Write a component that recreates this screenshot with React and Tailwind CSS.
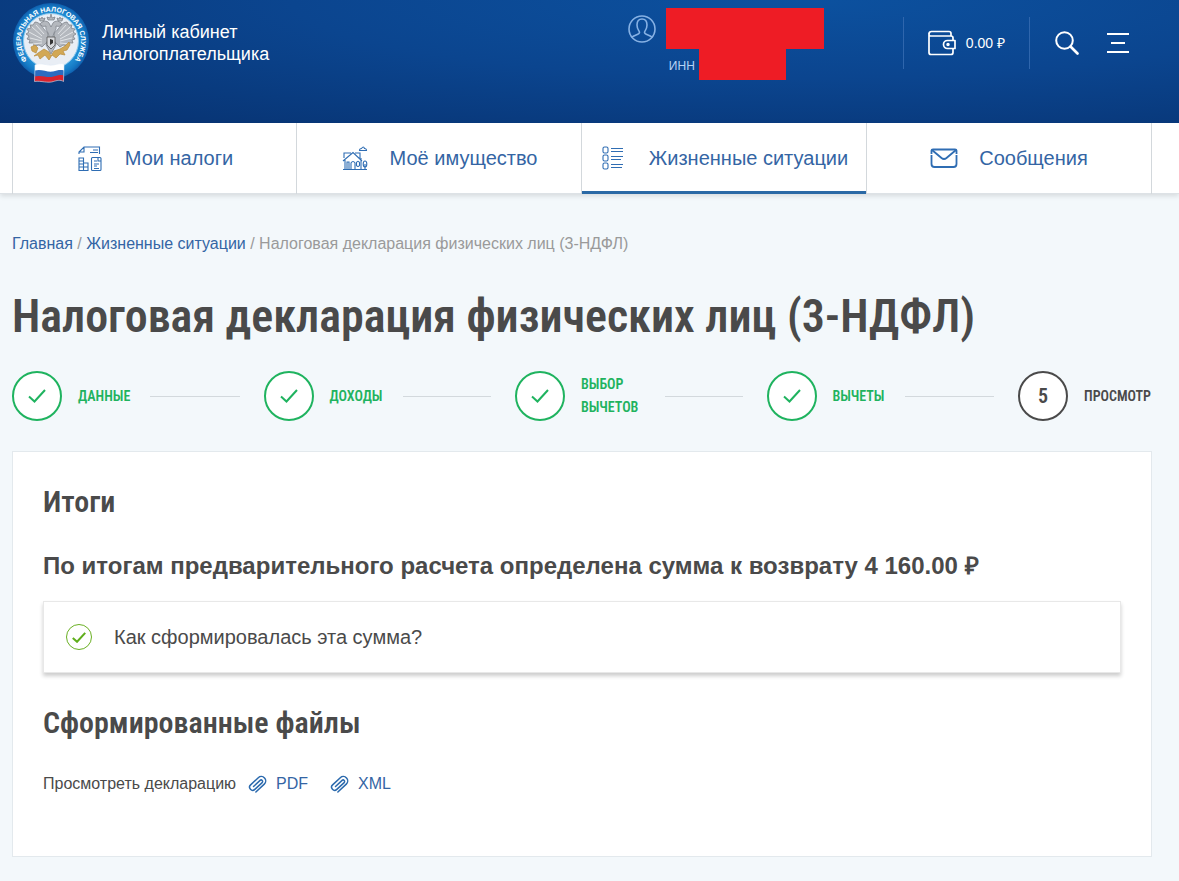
const displayFont = "font-['Roboto_Condensed','Liberation_Sans_Narrow',sans-serif] font-semibold";

const steps = [
  { label: 'Данные', done: true },
  { label: 'Доходы', done: true },
  { label: 'Выбор вычетов', done: true },
  { label: 'Вычеты', done: true },
  { label: 'Просмотр', done: false },
];

function Logo() {
  return (
    <svg viewBox="0 0 78 84" className="w-[78px] h-[84px] shrink-0" aria-hidden="true">
      <defs>
        <radialGradient id="ring">
          <stop offset="0.7" stopColor="#2593d8" />
          <stop offset="0.9" stopColor="#1579c4" />
          <stop offset="1" stopColor="#0f5fae" />
        </radialGradient>
        <path id="ringText" d="M 18 63 A 30 30 0 1 1 60 63" />
      </defs>
      <circle cx="39" cy="41" r="38" fill="url(#ring)" />
      <circle cx="39" cy="41" r="27.5" fill="#e9eef5" stroke="#8ecbf0" />
      <text fill="#fff" className="font-['Liberation_Sans',sans-serif] font-bold text-[7px]">
        <textPath href="#ringText" startOffset="50%" textAnchor="middle">
          ФЕДЕРАЛЬНАЯ НАЛОГОВАЯ СЛУЖБА
        </textPath>
      </text>
      {/* eagle wings */}
      <g fill="#b4b8be" stroke="#777b83" strokeWidth="0.7">
        <path d="M36 33C31 30 29 22 23 22l-2 3-3 0 1 3-4 1 2 3-3 2 3 2-2 3 3 1-1 3 4 0 1 3 5-1 3 2 6-6z" />
        <path d="M42 33c5-3 7-11 13-11l2 3 3 0-1 3 4 1-2 3 3 2-3 2 2 3-3 1 1 3-4 0-1 3-5-1-3 2-6-6z" />
        <path d="M37 36c-1-5-4-6-3-10-3 1-5 0-6-2 2-3 7-4 9-1l2 4 2-4c2-3 7-2 9 1-1 2-3 3-6 2 1 4-2 5-3 10l3 9-5 9-5-9z" />
        <path d="M36 20l-1-3 3 1 1-4 1 4 3-1-1 3zM28 21l-1-3 2 1 1-2 1 2 2-1-1 3zM46 21l-1-3 2 1 1-2 1 2 2-1-1 3z" />
      </g>
      <g stroke="#eef0f3" strokeWidth="0.8" fill="none">
        <path d="M20 27l10 9M17 32l13 7M18 38l12 3M20 44l10-1M24 25l8 9M58 27l-10 9M61 32l-13 7M60 38l-12 3M58 44l-10-1M54 25l-8 9" />
      </g>
      <path d="M35 37h8v8l-4 4-4-4z" fill="#d7d9dc" stroke="#555" strokeWidth="0.8" />
      <path d="M38 39l3 1v3l-3 2z" fill="#333" />
      <g fill="#d2a855" stroke="#b98d3e" strokeWidth="0.7">
        <path d="M19 47l4-2 3 3-2 5-4-2zM26 53l6-4 5 3 2 4 3-5 6-2 5-3 4-4 1 3-3 5-4 1 2 4-5-1-4 4-4-3-3 5-4-5-5 4-2-4-4 1z" />
      </g>
      {/* flag */}
      <path d="M23 65c6-3 12 1 18 0 5-1 8-2 11-1l0 8H23z" fill="#fff" />
      <path d="M23 70.500c6-2 12 2 18 1 4-1 7-2 11-1l-.5 8H22.500z" fill="#2c6cc0" />
      <path d="M22.500 76.500c7-2 13 2 19 0 4-1 7-2 10-1v6c-3-2-7-1-10 0-6 2-12-1-19 0z" fill="#d8232e" />
      <path d="M23 65c6-3 12 1 18 0 5-1 8-2 11-1l-.5 17.500c-3-2-7-1-10 0-6 2-12-1-19 0z" fill="none" stroke="#dfe9f5" strokeWidth="0.6" />
    </svg>
  );
}

function UserIcon() {
  return (
    <svg viewBox="0 0 28 28" className="size-7 shrink-0" fill="none" stroke="#86b1e4" strokeWidth="1.6" aria-hidden="true">
      <circle cx="14" cy="14" r="13" />
      <path d="M3.5 22.5c3-2.5 8-3 8-5 0-1.500-2.500-3-2.500-7.500 0-4 2-6 5-6s5 2 5 6c0 4.500-2.500 6-2.500 7.500 0 2 5 2.500 8 5" />
    </svg>
  );
}

function WalletIcon() {
  return (
    <svg viewBox="0 0 28 26" className="w-7 h-[26px]" fill="none" stroke="#fff" strokeWidth="1.7" strokeLinejoin="round" aria-hidden="true">
      <path d="M25 10V8q0-2-2-2H2.500Q1 6 1 4v18.500q0 2 2 2h20q2 0 2-2V18.500" />
      <path d="M1 4Q1 1.500 3.500 1.500H21q2 0 2 2V6" />
      <path d="M27 10.500h-7.500a4 4 0 0 0 0 8H27z" />
      <circle cx="20" cy="14.500" r="0.900" fill="#fff" />
    </svg>
  );
}

function SearchIcon() {
  return (
    <svg viewBox="0 0 24 24" className="size-6" fill="none" stroke="#fff" aria-hidden="true">
      <circle cx="9.500" cy="9.500" r="8.300" strokeWidth="2" />
      <path d="M15.500 15.500l7 7" strokeWidth="2.600" strokeLinecap="round" />
    </svg>
  );
}

function MenuIcon() {
  return (
    <svg viewBox="0 0 24 24" className="size-6" stroke="#fff" strokeWidth="2" aria-hidden="true">
      <path d="M1 3h22M5 12h14M1 21h22" />
    </svg>
  );
}

function TaxIcon() {
  return (
    <>
      <path d="M3 10V8l5-5h15.500v7M3 8h5V3M17 6h5M14 8.500h8" />
      <path d="M3 14h4.500v12.500H3zM7.500 19H12v7.500H7.500zM3 17h4.500M3 20h4.500M3 23h9" />
      <rect x="15.500" y="13.500" width="9.500" height="13" rx="1" />
      <path d="M18 17h3M18 20h5M18 22h3M18 24.500h5M22 14v3h3" />
    </>
  );
}

function HouseIcon() {
  return (
    <>
      <path d="M2 25.500h24M4 25V15M20 25V14M2 17l10-8.500L21 17M3 14V9h7M14 9h5v5" />
      <path d="M6 25v-7h2v7M10 25v-6q2-3 4 0v6M15.500 18.500q1.500-2.500 3 0v3q-1.500 2-3 0z" />
      <ellipse cx="24" cy="20" rx="1.800" ry="3" />
      <path d="M24 20v5.500M18.500 6.500h7q0-2-2-2-1-3-3 0-2 0-2 2z" />
    </>
  );
}

function ListIcon() {
  return (
    <>
      <rect x="3" y="3" width="5" height="6" rx="1.500" />
      <rect x="3" y="11" width="5" height="6" rx="1.500" />
      <rect x="3" y="19" width="5" height="6" rx="1.500" />
      <path d="M11 4.500h12M11 7.500h12M11 12.500h12M11 15.500h10M11 20.500h12M11 23.500h11" />
    </>
  );
}

function MailIcon() {
  return (
    <>
      <path d="M1.500 10V6.500Q1.500 5.500 3 5.500h22q1.500 0 1.500 1V10M1.500 11v9q0 3 3 3h19q3 0 3-3V11" strokeWidth="1.800" />
      <path d="M2 6l9.500 8q2.500 2 5 0L26 6" strokeWidth="1.800" />
    </>
  );
}

function CheckIcon({ className, strokeWidth = 2 }) {
  return (
    <svg viewBox="0 0 18 14" className={className} fill="none" stroke="currentColor" strokeWidth={strokeWidth} aria-hidden="true">
      <path d="M1 7.500l5.500 5L17 1" />
    </svg>
  );
}

function ClipIcon() {
  return (
    <svg viewBox="0 0 20 20" className="size-5" fill="none" stroke="#2a69ad" strokeWidth="1.500" strokeLinecap="round" aria-hidden="true">
      <path
        transform="translate(10 10) rotate(47)"
        d="M4.400 7V-4.500A4.400 4.400 0 0 0-4.400-4.500V6A3.100 3.100 0 0 0 1.800 6V-4A1.500 1.500 0 0 0-1.200-4V5"
      />
    </svg>
  );
}

const tabs = [
  { label: 'Мои налоги', Icon: TaxIcon },
  { label: 'Моё имущество', Icon: HouseIcon },
  { label: 'Жизненные ситуации', Icon: ListIcon, active: true },
  { label: 'Сообщения', Icon: MailIcon },
];

function Header() {
  return (
    <header className="bg-[radial-gradient(ellipse_at_68%_0%,#0c519f_0%,#0b458f_45%,#07316f_100%)] text-white">
      <div className="ml-3 mr-[27px] flex items-start pb-[39px]">
        <a href="#" className="flex items-start gap-3">
          <Logo />
          <span className="pt-[21px] text-lg leading-[22px]">
            Личный кабинет
            <br />
            налогоплательщика
          </span>
        </a>

        <div className="ml-auto mr-[79px] flex pt-2">
          <div className="pt-[7px]">
            <UserIcon />
          </div>
          <div className="ml-[10px]">
            <div className="w-[158px] h-[41px] bg-[#ee1c25]" />
            <div className="flex">
              <span className="w-[33px] pl-[3px] pt-2 text-xs leading-[18px] text-[#b5d2f5]">ИНН</span>
              <div className="w-[87px] h-[31px] bg-[#ee1c25]" />
            </div>
          </div>
        </div>

        <div className="mt-[17px] h-[52px] flex items-center">
          <a href="#" className="h-full flex items-center gap-[10px] px-6 border-x border-[#2f66ad] text-sm">
            <WalletIcon />
            <span>0.00 ₽</span>
          </a>
          <button type="button" aria-label="Поиск" className="ml-[25px]">
            <SearchIcon />
          </button>
          <button type="button" aria-label="Меню" className="ml-[27px] mr-[22px]">
            <MenuIcon />
          </button>
        </div>
      </div>
    </header>
  );
}

function Tabs() {
  return (
    <nav className="bg-white border-b border-[#dde2e6] shadow-[0_2px_5px_rgba(0,0,0,0.12)]">
      <div className="ml-3 mr-[27px] grid grid-cols-4">
        {tabs.map(({ label, Icon, active }) => (
          <a
            key={label}
            href="#"
            className={
              'h-[71px] -mb-px pb-[2px] flex items-center justify-center gap-[21px] border-r first:border-l border-[#d3d8dc] text-xl text-[#3465a4] ' +
              (active ? 'shadow-[inset_0_-3px_0_#2a69a5]' : '')
            }
          >
            <svg viewBox="0 0 28 28" className="size-7 shrink-0" fill="none" stroke="#2f6db3" strokeWidth="1.100" aria-hidden="true">
              <Icon />
            </svg>
            {label}
          </a>
        ))}
      </div>
    </nav>
  );
}

function Steps() {
  return (
    <ol className="mt-[23px] flex items-center">
      {steps.map((step, i) => {
        const last = i === steps.length - 1;
        return (
          <li
            key={step.label}
            className={
              'flex items-center ' +
              (last ? 'min-w-[134px] ' : 'flex-1 ') +
              (step.done ? 'text-[#1fb35f]' : 'text-[#4a4a4a]')
            }
          >
            <span className="size-[50px] shrink-0 rounded-full border-2 border-current bg-white flex items-center justify-center">
              {step.done ? (
                <CheckIcon className="w-[18px] h-[14px]" />
              ) : (
                <span className={displayFont + ' text-xl'}>{i + 1}</span>
              )}
            </span>
            <span className={displayFont + ' ml-4 max-w-16 text-sm leading-[23px] uppercase' + (last ? ' whitespace-nowrap' : '')}>
              {step.label}
            </span>
            {!last && <span className="ml-5 mr-6 h-px flex-1 bg-[#d3d9dd]" />}
          </li>
        );
      })}
    </ol>
  );
}

export default function App() {
  return (
    <div className="min-h-screen bg-[#f3f8fb] font-['Liberation_Sans',Arial,sans-serif] text-[#4a4a4a]">
      <Header />
      <Tabs />

      <main className="ml-3 mr-[27px] pt-[38px] pb-6">
        <div className="text-base text-[#9a9a9a]">
          <a href="#" className="text-[#3465a4]">Главная</a>
          {' / '}
          <a href="#" className="text-[#3465a4]">Жизненные ситуации</a>
          {' / '}
          <span>Налоговая декларация физических лиц (3-НДФЛ)</span>
        </div>

        <h1 className={displayFont + ' mt-7 text-[46px] leading-[64px]'}>
          Налоговая декларация физических лиц (3-НДФЛ)
        </h1>

        <Steps />

        <section className="mt-[30px] min-h-[406px] bg-white border border-[#e3e9ed] px-[30px] pt-[30px]">
          <h2 className={displayFont + ' text-3xl leading-10'}>Итоги</h2>
          <p className="mt-7 text-2xl leading-8 font-bold">
            По итогам предварительного расчета определена сумма к возврату 4 160.00 ₽
          </p>

          <button
            type="button"
            className="mt-[19px] w-full h-[72px] px-[22px] flex items-center gap-[22px] border border-[#e8e8e8] bg-white text-xl shadow-[0_3px_4px_rgba(0,0,0,0.2)]"
          >
            <span className="size-[26px] rounded-full border border-[#6ab023] text-[#5fae1b] flex items-center justify-center">
              <CheckIcon className="w-[14px] h-[11px]" strokeWidth={2.6} />
            </span>
            Как сформировалась эта сумма?
          </button>

          <h2 className={displayFont + ' mt-[30px] text-3xl leading-10'}>Сформированные файлы</h2>
          <div className="mt-[29px] flex items-center text-base">
            <span>Просмотреть декларацию</span>
            <a href="#" className="ml-3 flex items-center gap-2 text-[#3465a4]">
              <ClipIcon />
              PDF
            </a>
            <a href="#" className="ml-[22px] flex items-center gap-2 text-[#3465a4]">
              <ClipIcon />
              XML
            </a>
          </div>
        </section>
      </main>
    </div>
  );
}
